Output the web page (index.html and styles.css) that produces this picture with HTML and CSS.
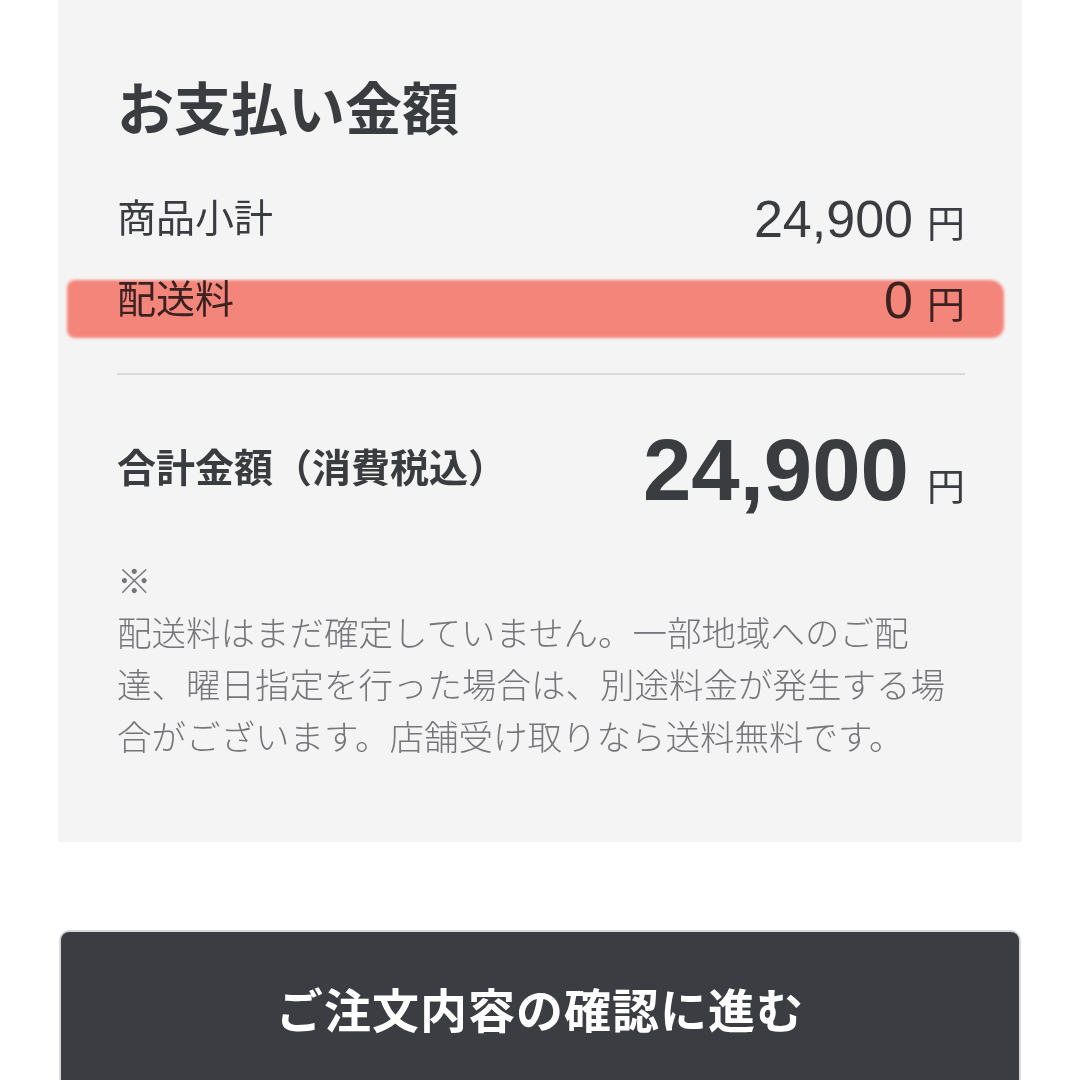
FILE: index.html
```html
<!DOCTYPE html>
<html lang="ja">
<head>
    <meta charset="UTF-8">
    <meta name="viewport" content="width=device-width, initial-scale=1.0">
    <title>お支払い金額</title>
    <link rel="stylesheet" href="styles.css">
</head>
<body>

<div class="payment">
    <h2>お支払い金額</h2>

    <!-- Subtotal and shipping -->
    <div class="row">
        <span class="label">商品小計</span>
        <span class="amount"><span class="num">24,900</span><span class="yen">円</span></span>
    </div>
    <div class="row shipping">
        <span class="label">配送料</span>
        <span class="amount"><span class="num">0</span><span class="yen">円</span></span>
        <span class="marker"></span>
    </div>

    <hr class="divider">

    <!-- Total -->
    <div class="row total">
        <span class="label">合計金額（消費税込）</span>
        <span class="amount"><span class="num">24,900</span><span class="yen">円</span></span>
    </div>

    <p class="note">※<br>配送料はまだ確定していません。一部地域へのご配達、曜日指定を行った場合は、別途料金が発生する場合がございます。店舗受け取りなら送料無料です。</p>
</div>

<button class="next-btn" type="button">ご注文内容の確認に進む</button>

</body>
</html>
```

FILE: styles.css
```css
* {
    margin: 0;
    padding: 0;
    box-sizing: border-box;
}

body {
    font-family: "Liberation Sans", "Noto Sans CJK JP", sans-serif;
    background-color: #ffffff;
    color: #3b3c40;
    overflow: hidden;
}

.payment {
    background-color: #f4f4f4;
    margin: 0 58px;
    padding: 76px 57px 78px 59px;
}

h2 {
    font-size: 57px;
    line-height: 68px;
    font-weight: 700;
}

.row {
    position: relative;
    display: flex;
    justify-content: space-between;
    align-items: center;
    height: 60px;
    margin-top: 45px;
}

.row.shipping {
    margin-top: 21px;
}

.label {
    font-size: 39px;
    line-height: 60px;
    font-weight: 400;
}

.amount {
    font-size: 52px;
    line-height: 1;
    white-space: nowrap;
}

.yen {
    font-size: 38px;
    margin-left: 14px;
}

/* marker stroke drawn over the shipping row */
.marker {
    position: absolute;
    left: -50px;
    right: -39px;
    top: 10px;
    height: 58px;
    background-color: #ff8b80;
    border-radius: 8px 14px 12px 8px;
    mix-blend-mode: multiply;
    filter: blur(1.5px);
}

.divider {
    border: none;
    height: 2px;
    background-color: #d9d9d9;
    margin-top: 43px;
}

.row.total {
    height: 100px;
    margin-top: 44px;
}

.total .label {
    font-weight: 700;
}

.total .amount {
    font-size: 87px;
}

.total .num {
    font-weight: 700;
}

.total .yen {
    margin-left: 18px;
}

.note {
    margin-top: 37px;
    font-size: 34.5px;
    line-height: 52px;
    color: #76767a;
    font-weight: 300;
}

.next-btn {
    display: block;
    width: 962px;
    height: 170px;
    margin: 88px 0 0 59px;
    background-color: #3b3d42;
    border: 2px solid #d8d8da;
    border-radius: 10px;
    color: #ffffff;
    font-family: "Noto Sans CJK JP", sans-serif;
    font-size: 47px;
    font-weight: 700;
    letter-spacing: 1px;
    line-height: 150px;
    padding-bottom: 14px;
    cursor: pointer;
}
```
